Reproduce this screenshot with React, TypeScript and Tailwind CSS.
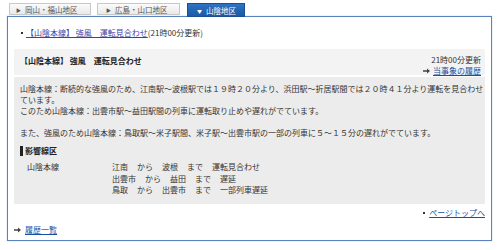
import React from "react";

const Arrow = () => (
  <svg width="7" height="6" viewBox="0 0 7 6" className="inline-block mr-[3px] align-middle">
    <path d="M0 2.2h4V0.5L7 3 4 5.5V3.8H0z" fill="#444" />
  </svg>
);

export default function App() {
  const rows = [
    ["江南", "から", "波根", "まで", "運転見合わせ"],
    ["出雲市", "から", "益田", "まで", "遅延"],
    ["鳥取", "から", "出雲市", "まで", "一部列車遅延"],
  ];
  return (
    <div
      className="w-[500px] h-[250px] bg-white pt-[3px] text-[8px] leading-[11px] text-[#333]"
      style={{ fontFamily: '"Noto Sans CJK JP", "Noto Sans", sans-serif' }}
    >
      <div className="flex items-start h-[13px] pl-[9px]">
        <div className="w-[82px] h-[12px] border border-[#c8c8c8] bg-gradient-to-b from-[#fbfbfb] to-[#e9e9e9] flex items-center pl-[6px] text-[#555] text-[7.5px]">
          <span className="text-[5px] mr-[4px] text-[#555]">▶</span>岡山・福山地区
        </div>
        <div className="ml-[6px] w-[83px] h-[12px] border border-[#c8c8c8] bg-gradient-to-b from-[#fbfbfb] to-[#e9e9e9] flex items-center pl-[8px] text-[#555] text-[7.5px]">
          <span className="text-[5px] mr-[4px] text-[#555]">▶</span>広島・山口地区
        </div>
        <div className="relative z-10 ml-[7px] w-[58px] h-[14px] bg-gradient-to-b from-[#2f73c2] to-[#1b5aa6] border border-[#1a4f94] flex items-center pl-[9px] text-white text-[7.5px]">
          <span className="text-[5px] mr-[4px]">▼</span>山陰地区
        </div>
      </div>
      <div className="ml-[7px] w-[485px] h-[225px] border border-[#5a83bd] shadow-[0_0_1px_#9db5d8]">
        <div className="pt-[10px] pl-[13px] flex items-center">
          <span className="w-[2px] h-[2px] bg-[#333] mr-[3px]"></span>
          <span className="text-[#3b3fa6] underline">【山陰本線】 強風　運転見合わせ</span>
          <span>(21時00分更新)</span>
        </div>
        <div className="mx-[6px] mt-[11px]">
          <div className="h-[28px] bg-[#f3f3f3] border-b-2 border-white flex justify-between pl-[6px] pr-[4px]">
            <div className="font-bold pt-[6px] text-[#222]">【山陰本線】 強風　運転見合わせ</div>
            <div className="flex flex-col items-end pt-[5px]">
              <div>21時00分更新</div>
              <div className="flex items-center">
                <Arrow />
                <span className="text-[#1a4fa0] underline">当事象の履歴</span>
              </div>
            </div>
          </div>
          <div className="h-[127px] bg-[#ececec] pl-[6px] pt-[6px]">
            <p>山陰本線：断続的な強風のため、江南駅～波根駅では１９時２０分より、浜田駅～折居駅間では２０時４１分より運転を見合わせ</p>
            <p>ています。</p>
            <p>このため山陰本線：出雲市駅～益田駅間の列車に運転取り止めや遅れがでています。</p>
            <p className="mt-[11px]">また、強風のため山陰本線：鳥取駅～米子駅間、米子駅～出雲市駅の一部の列車に５～１５分の遅れがでています。</p>
            <div className="mt-[7px] flex items-center font-bold text-[#222]">
              <span className="w-[3px] h-[10px] bg-[#222] mr-[2px]"></span>
              影響線区
            </div>
            <div className="mt-[5px] flex">
              <div className="w-[92px] pl-[7px]">山陰本線</div>
              <div className="flex flex-col">
                {rows.map((r, i) => (
                  <div key={i} className="flex h-[11.5px]">
                    {r.map((c, j) => (
                      <span key={j} className="mr-[9px]">{c}</span>
                    ))}
                  </div>
                ))}
              </div>
            </div>
          </div>
          <div className="flex justify-end items-center mt-[3px]">
            <span className="w-[2px] h-[2px] bg-[#333] mr-[4px]"></span>
            <span className="text-[#1a4fa0] underline">ページトップへ</span>
          </div>
          <div className="flex items-center mt-[6px]">
            <Arrow />
            <span className="text-[#1a4fa0] underline ml-[1px]">履歴一覧</span>
          </div>
        </div>
      </div>
    </div>
  );
}
